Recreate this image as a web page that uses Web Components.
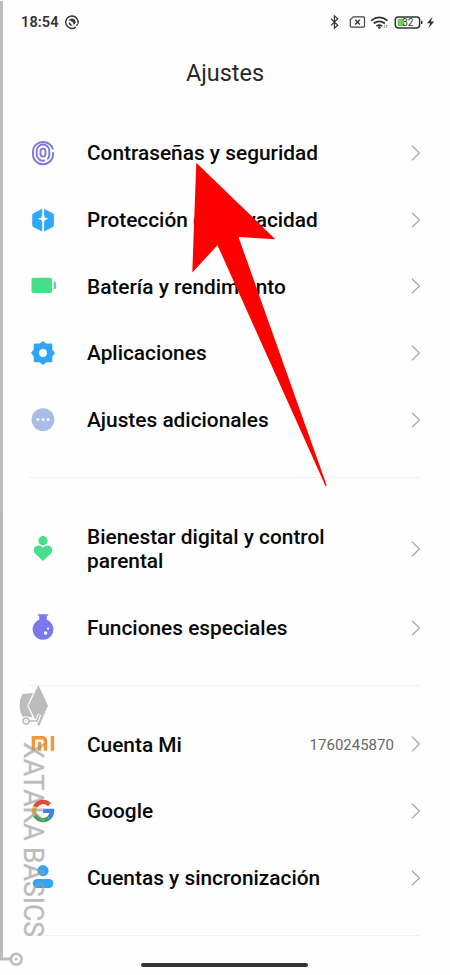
<!DOCTYPE html>
<html lang="es">
<head>
<meta charset="utf-8">
<title>Ajustes</title>
<style>
html,body{margin:0;padding:0;background:#fefefe}
body{font-family:Roboto,"Noto Sans",sans-serif}
</style>
</head>
<body>
<settings-screen></settings-screen>
<script>
const icons = {
  finger: `<g fill="none" stroke="#8079dc" stroke-width="1.9" stroke-linecap="butt"><rect x="10.5" y="8.6" width="5" height="8" rx="2.5"/><path d="M17.2 19.4a6.3 6.3 0 0 0 2.1-4.6v-4a6.3 6.3 0 0 0-12.6 0v4a6.3 6.3 0 0 0 8.2 5.6"/><path d="M23 9.4a10.1 9.2 0 0 0-20 1.4v4a10 9.4 0 0 0 20 0v-2.6"/></g>`,
  shield: `<path fill="#31a9f8" d="M12.2 1.8 3.1 6.4Q2.2 7 2.2 8v10.3q0 1 .9 1.6l9.1 4.6V15.6l-.8-2.5-3.6-1.3 3.6-1.3.8-2.9zM14.1 1.8l8.9 4.6q.9.6.9 1.6v10.3q0 1-.9 1.6l-8.9 4.6V15.6l.7-2.5 3.6-1.3-3.6-1.3-.7-2.9z"/>`,
  battery: `<rect x="1.5" y="4.7" width="20.5" height="15.3" rx="1.8" fill="#45df8c"/><path fill="#45df8c" d="M23.7 8.7h1.4q.8 0 .8.8v5.7q0 .8-.8.8h-1.4z"/>`,
  gear: `<path fill="#31a5f6" stroke="#31a5f6" stroke-width="2.4" stroke-linejoin="round" d="m13 2.4 2.9 2.4h5.2v5.2l2.5 3-2.5 3v5.1h-5.2L13 23.6l-2.9-2.5H4.9V16l-2.5-3 2.5-3V4.8h5.2z"/><circle cx="13" cy="13" r="3.9" fill="#fff"/>`,
  dots: `<circle cx="13" cy="12.6" r="11.4" fill="#a9bce5"/><g fill="#fff"><circle cx="7.9" cy="12.6" r="1.45"/><circle cx="13" cy="12.6" r="1.45"/><circle cx="18.1" cy="12.6" r="1.45"/></g>`,
  heart: `<g fill="#48de8b"><circle cx="13" cy="4.7" r="4.6"/><path d="m13 25-7.9-7.4a4.8 4.8 0 0 1 0-6.8q3.9-3.1 7.9.9 4-4 7.9-.9a4.8 4.8 0 0 1 0 6.8z"/></g>`,
  flask: `<path fill="#7d77ef" d="M8.4-.8h9.3q.7 0 .7.8t-.7.8h-.9v3.9a10.4 10.4 0 1 1-7.6 0V.8h-.8q-.8 0-.8-.8t.8-.8z"/><circle cx="15.6" cy="18" r="1.8" fill="#fff"/><circle cx="18.1" cy="13.6" r="1.1" fill="#fff"/>`,
  mi: `<path fill="none" stroke="#f2963b" stroke-width="3.5" d="M3.4 19.7V6.8h8.7q3.4 0 3.4 3.4v9.5M9.5 11v8.7M22.4 5v14.7"/>`,
  google: `<g fill="none" stroke-width="4.4"><path stroke="#e54836" d="M5.05 8.7a9 9 0 0 1 14.4-2.1"/><path stroke="#f4bc24" d="M5.05 17.3a9 9 0 0 1 0-8.6"/><path stroke="#39a653" d="M18.8 20a9 9 0 0 1-13.75-2.7"/><path stroke="#4580e9" d="M18.8 20q3-2.2 3.1-7.1H13"/></g>`,
  account: `<g fill="#32a5f3"><circle cx="13" cy="5.6" r="5.6"/><rect x="2.8" y="14" width="20.6" height="9" rx="4.4"/></g>`
};

function define(name, render) {
  customElements.define(name, class extends HTMLElement {
    connectedCallback() {
      if (this.shadowRoot) return;
      this.attachShadow({mode: "open"}).innerHTML = render(this);
    }
  });
}

define("settings-icon", el => `<style>:host{display:block;width:26px;height:26px}svg{display:block;overflow:visible}</style>
<svg width="26" height="26" viewBox="0 0 26 26">${icons[el.getAttribute("name")]}</svg>`);

define("settings-row", el => `<style>
:host{display:grid;grid-template-columns:26px 1fr auto 11px;align-items:center;height:66.67px;padding:0 29.5px 0 30px;box-sizing:border-box}
:host([tall]){height:91.4px}
.label{margin-left:31px;padding-top:1px;font-size:20.85px;line-height:24.4px;font-weight:500;color:#080808;white-space:nowrap}
.value{font-size:15px;color:#686868;margin-right:15.6px;padding-top:1px}
svg{display:block}
</style><settings-icon name="${el.getAttribute("icon")}"></settings-icon>
<div class="label"><slot></slot></div><div class="value"><slot name="value"></slot></div>
<svg width="11" height="18" viewBox="0 0 11 18"><path d="m2 1.7 7.4 7.3L2 16.3" fill="none" stroke="#aaa" stroke-width="1.3"/></svg>`);

define("settings-group", () => `<style>
:host{display:block;margin-bottom:25px}
.line{height:1px;margin:24.1px 30px 0 29px;background:#f1f1f1}
</style><slot></slot><div class="line"></div>`);

define("status-bar", () => `<style>
:host{display:flex;height:43px;align-items:center;justify-content:space-between;padding:0 15px 0 21px;box-sizing:border-box;color:#333}
.left{display:flex;align-items:center}
.time{font-size:14.5px;font-weight:600;letter-spacing:.1px;margin-right:6px;padding-top:1px}
svg{display:block;overflow:visible}
</style>
<div class="left"><span class="time">18:54</span>
<svg width="14" height="14" viewBox="0 0 14 14"><path d="M10.8 12.1A6.2 6.2 0 1 1 13 8.6M12.7 9.3l-1.4 1.5" fill="none" stroke="#333" stroke-width="1.4"/><path d="M3.4 5.8Q6.5 1.5 10 5l.8 2.6-2.1 2.7-.5-2.8-3-2z" fill="#333"/><path d="m3.8 6.8 3.8 3.6H5Q3.4 9.2 3.8 6.8z" fill="#333"/></svg></div>
<svg width="106" height="18" viewBox="0 0 106 18">
<path d="m2 5.6 6.7 6.6-3.3 3V2.8l3.3 3L2 12.4" fill="none" stroke="#333" stroke-width="1.2"/>
<path d="M24.2 3.9h10.3q1 0 1 1v8.2q0 1-1 1H22.3q-1 0-1-1V6.8z" fill="none" stroke="#444" stroke-width="1.2"/><path d="m26.2 6.8 4.6 4.6m0-4.6-4.6 4.6" stroke="#333" stroke-width="1.4"/>
<g fill="none" stroke="#333" stroke-width="1.7"><path d="M42.1 7.6q8.2-6.4 16.4 0M44.7 10.5q5.6-4.4 11.2 0M47.4 13.1q2.9-2.1 5.8 0"/></g><circle cx="50.3" cy="14.5" r="1.3" fill="#333"/><path d="M55.4 11.8v3m-1-1 1 1 1-1M57.6 15v-3m-1 1 1-1 1 1" fill="none" stroke="#777" stroke-width=".6"/>
<rect x="66.3" y="3.9" width="24.3" height="11" rx="2.8" fill="none" stroke="#333" stroke-width="1.5"/><rect x="68.6" y="5.7" width="6.8" height="7.4" rx="1" fill="#6ed151"/><path d="M92.7 7.7v3.4" stroke="#333" stroke-width="1.4"/><text x="73.2" y="13" font-size="10" font-weight="400" fill="#333">32</text>
<path d="M103.6 3.6 98 10.2h3.1l-1.8 5.1 6-6.8h-3.4z" fill="#333"/>
</svg>`);

define("pointer-arrow", () => `<style>:host{position:absolute;left:0;top:0;pointer-events:none}svg{display:block}</style>
<svg width="450" height="500" viewBox="0 0 450 500"><path d="M196.3 162.7 275.3 239.2 238.5 237 326.8 485.8 325.5 486 217.5 245.2 192.3 272.5z" fill="#fe0000"/></svg>`);

define("basics-watermark", () => `<style>:host{position:absolute;left:0;top:0;pointer-events:none}svg{display:block}</style>
<svg width="60" height="975" viewBox="0 0 60 975"><g opacity=".65">
<path d="M1.5 1V958.9H10.6" fill="none" stroke="#999" stroke-width="3"/><circle cx="16.2" cy="959.2" r="5.4" fill="none" stroke="#999" stroke-width="2.5"/><circle cx="16.2" cy="959.2" r="1.4" fill="#999"/>
<path d="M38.4 685 48 705.7 39 726.5 28.4 705.7zM33 693 22.4 694Q16.5 706 22.8 717.2L32.4 717 27.2 705.7z" fill="#999"/>
<path d="M27 721h10l2.5-6.5" fill="none" stroke="#fff" stroke-width="3.6"/><circle cx="26" cy="721" r="3" fill="#fff" stroke="#fff" stroke-width="3.4"/>
<circle cx="26" cy="721" r="3" fill="none" stroke="#999" stroke-width="1.6"/><circle cx="26" cy="721" r=".8" fill="#999"/><path d="M29 721h8l2.3-6" fill="none" stroke="#999" stroke-width="1.5"/>
<text transform="translate(24.1 742) rotate(90)" font-size="28" textLength="195" lengthAdjust="spacingAndGlyphs" fill="#999" stroke="#999" stroke-width=".3">XATAKA BASICS</text>
</g></svg>`);

define("settings-screen", () => `<style>
:host{display:block;position:relative;width:450px;height:975px;overflow:hidden;background:#fefefe}
h1{margin:0;height:60px;line-height:61px;text-align:center;font-size:23.4px;font-weight:400;color:#282828}
main{padding-top:16.6px}
.home{position:absolute;left:141px;top:962.5px;width:167px;height:4px;border-radius:2px;background:#303331}
</style>
<status-bar></status-bar><h1>Ajustes</h1>
<main>
<settings-group>
<settings-row icon="finger">Contraseñas y seguridad</settings-row>
<settings-row icon="shield">Protección de privacidad</settings-row>
<settings-row icon="battery">Batería y rendimiento</settings-row>
<settings-row icon="gear">Aplicaciones</settings-row>
<settings-row icon="dots">Ajustes adicionales</settings-row>
</settings-group>
<settings-group>
<settings-row icon="heart" tall>Bienestar digital y control<br>parental</settings-row>
<settings-row icon="flask">Funciones especiales</settings-row>
</settings-group>
<settings-group>
<settings-row icon="mi">Cuenta Mi<span slot="value">1760245870</span></settings-row>
<settings-row icon="google">Google</settings-row>
<settings-row icon="account">Cuentas y sincronización</settings-row>
</settings-group>
</main>
<div class="home"></div>
<basics-watermark></basics-watermark>
<pointer-arrow></pointer-arrow>`);
</script>
</body>
</html>
